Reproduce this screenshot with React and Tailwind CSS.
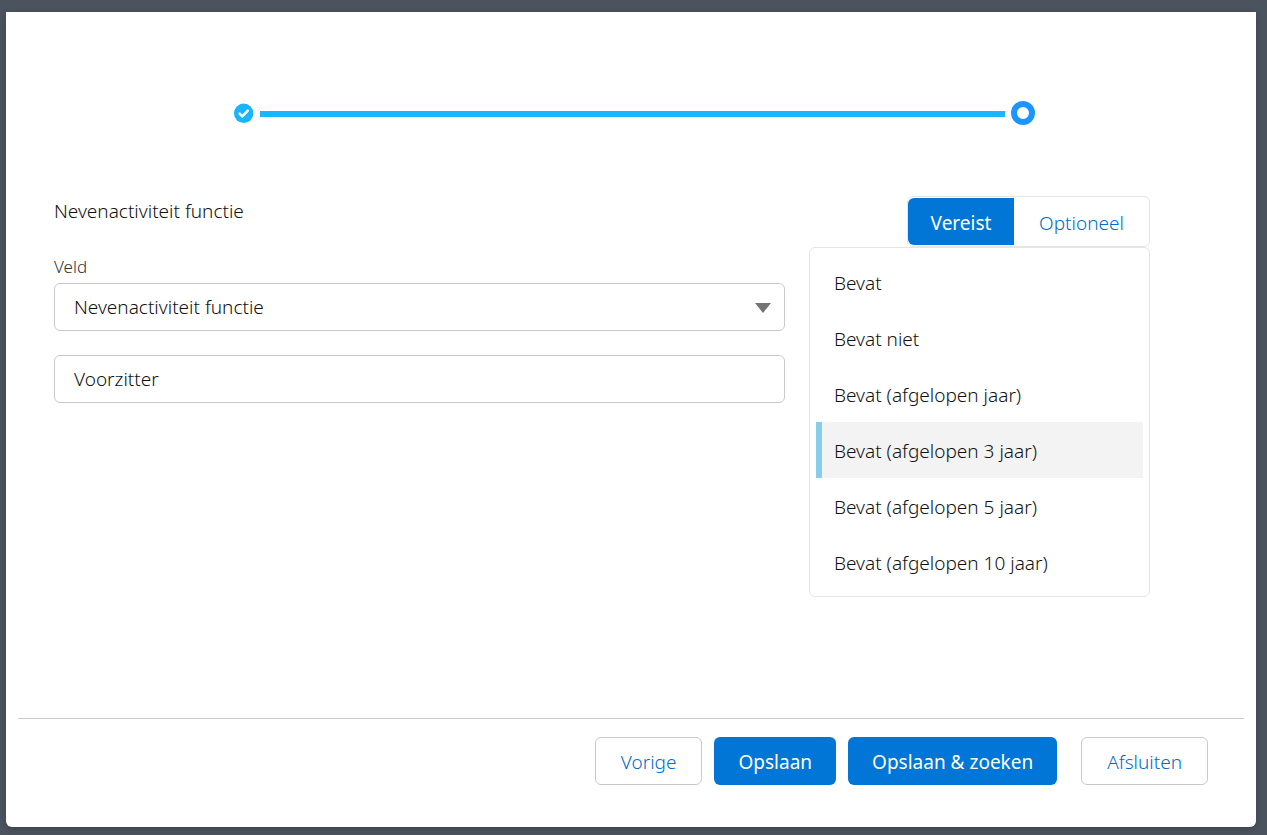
import React, { useState } from "react";

const fields = ["Nevenactiviteit functie"];

const operators = [
  "Bevat",
  "Bevat niet",
  "Bevat (afgelopen jaar)",
  "Bevat (afgelopen 3 jaar)",
  "Bevat (afgelopen 5 jaar)",
  "Bevat (afgelopen 10 jaar)",
];

const Progress = () => (
  <div className="flex items-center gap-1.5 pl-[228px] pr-[221px] pt-[89px]">
    <svg className="size-5 flex-shrink-0" viewBox="0 0 20 20" aria-hidden="true">
      <circle cx="9.7" cy="10.3" r="9.7" fill="#1ab5ff" />
      <path d="M5.6 10.7 8.3 13.4 13.8 7.7" fill="none" stroke="#fff" strokeWidth="2.5" strokeLinecap="round" strokeLinejoin="round" />
    </svg>
    <div className="h-1.5 flex-1 bg-[#1ab5ff] mt-0.5" />
    <span className="size-6 flex-shrink-0 rounded-full border-6 border-[#1b96ff]" />
  </div>
);

const Button = ({ primary, className = "", children }) => (
  <button
    type="button"
    className={`h-12 rounded-md pt-0.5 whitespace-nowrap cursor-pointer ${
      primary
        ? "bg-[#0176d6] px-6 text-white font-normal"
        : "border border-[#c9c9c9] bg-white px-[25px] text-[#006bcc]"
    } ${className}`}
  >
    {children}
  </button>
);

const App = () => {
  const [required, setRequired] = useState(true);
  const [operator, setOperator] = useState(operators[3]);
  const [value, setValue] = useState("Voorzitter");

  return (
    <div className="flex min-h-screen bg-[#4b535f] pt-3 pr-[11px] pb-2 pl-1.5 font-['Noto_Sans',sans-serif] font-light text-[19px] leading-6 text-[#111111]">
      <div className="flex flex-1 flex-col rounded-b-md bg-white shadow-[0_2px_6px_rgba(0,0,0,0.2)]">
        <Progress />

        {/* Filter */}
        <div className="flex items-start gap-6 pt-[71px] pr-[106px] pl-12">
          <div className="min-w-0 flex-1">
            <h2 className="pt-[3px] pb-8 font-light">Nevenactiviteit functie</h2>
            <label htmlFor="field" className="block pb-1 text-[17px] text-[#333333]">
              Veld
            </label>
            <div className="relative">
              <select
                id="field"
                className="h-12 w-full appearance-none rounded-md border border-[#c9c9c9] bg-white px-[19px]"
              >
                {fields.map((field) => (
                  <option key={field}>{field}</option>
                ))}
              </select>
              <svg className="pointer-events-none absolute top-5 right-3.5 h-2.5 w-4" viewBox="0 0 16 10" aria-hidden="true">
                <path d="M0 0h16L8 10z" fill="#747474" />
              </svg>
            </div>
            <input
              type="text"
              aria-label="Waarde"
              value={value}
              onChange={(e) => setValue(e.target.value)}
              className="mt-6 h-12 w-full rounded-md border border-[#c9c9c9] bg-white px-[19px]"
            />
          </div>

          <div className="flex w-[341px] flex-col">
            <div className="flex h-[51px] self-end rounded-md border border-[#e5e5e5] py-px">
              <button
                type="button"
                onClick={() => setRequired(true)}
                className={`w-[106px] rounded-l-md pt-0.5 ${required ? "bg-[#0176d6] text-white font-normal" : "text-[#006bcc]"}`}
              >
                Vereist
              </button>
              <button
                type="button"
                onClick={() => setRequired(false)}
                className={`w-[135px] rounded-r-md pt-0.5 ${required ? "text-[#006bcc]" : "bg-[#0176d6] text-white font-normal"}`}
              >
                Optioneel
              </button>
            </div>
            <ul role="listbox" aria-label="Operator" className="rounded-md border border-[#e5e5e5] p-1.5">
              {operators.map((item) => (
                <li key={item} role="option" aria-selected={item === operator}>
                  <button
                    type="button"
                    onClick={() => setOperator(item)}
                    className={`h-14 w-full border-l-6 pt-0.5 pl-3 text-left ${
                      item === operator ? "border-[#87ceeb] bg-[#f3f3f3]" : "border-transparent"
                    }`}
                  >
                    {item}
                  </button>
                </li>
              ))}
            </ul>
          </div>
        </div>

        {/* Footer */}
        <div className="mx-3 mt-auto flex justify-end gap-3 border-t border-[#c9c9c9] pt-[18px] pr-9 pb-[42px]">
          <Button>Vorige</Button>
          <Button primary>Opslaan</Button>
          <Button primary>Opslaan &amp; zoeken</Button>
          <Button className="ml-3">Afsluiten</Button>
        </div>
      </div>
    </div>
  );
};

export default App;
